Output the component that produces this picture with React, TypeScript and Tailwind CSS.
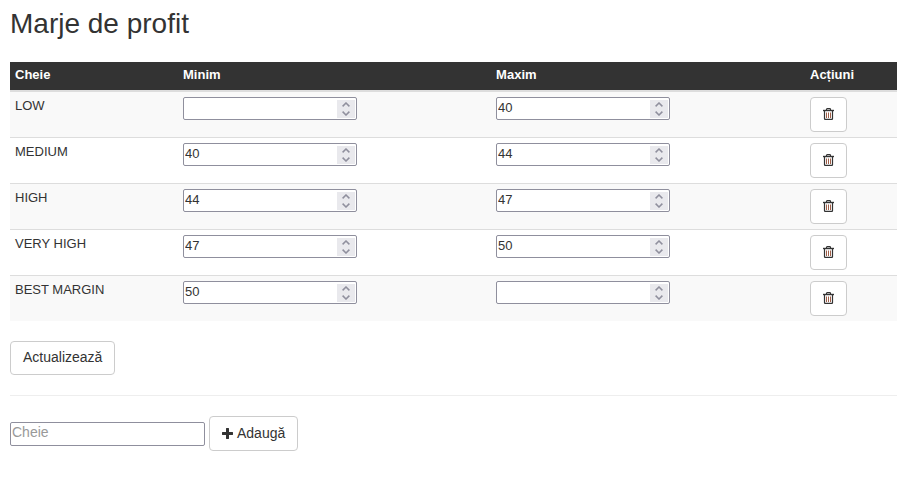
import { useState } from "react";

type Margin = {
  key: string;
  min: string;
  max: string;
};

const initialMargins: Margin[] = [
  { key: "LOW", min: "", max: "40" },
  { key: "MEDIUM", min: "40", max: "44" },
  { key: "HIGH", min: "44", max: "47" },
  { key: "VERY HIGH", min: "47", max: "50" },
  { key: "BEST MARGIN", min: "50", max: "" },
];

function TrashIcon() {
  return (
    <svg width="11" height="12" viewBox="0 0 11 12" fill="none" stroke="#333" aria-hidden="true">
      <path d="M3.5 2V1.5q0-.8.8-.8h2.4q.8 0 .8.8V2" strokeWidth="1.2" />
      <path d="M0 2.5h11" strokeWidth="1.4" />
      <path d="M1.5 3v7.7q0 .7.7.7h6.6q.7 0 .7-.7V3" strokeWidth="1.2" />
      <path d="M3.5 4.5V10M5.5 4.5V10M7.5 4.5V10" stroke="#a0604a" />
    </svg>
  );
}

function PlusIcon() {
  return (
    <svg width="11" height="11" viewBox="0 0 11 11" fill="#333" aria-hidden="true">
      <path d="M4.4 0h2.2q.4 0 .4.4V4h3.6q.4 0 .4.4v2.2q0 .4-.4.4H7v3.6q0 .4-.4.4H4.4q-.4 0-.4-.4V7H.4q-.4 0-.4-.4V4.4Q0 4 .4 4H4V.4q0-.4.4-.4z" />
    </svg>
  );
}

function NumberField({
  label,
  value,
  onChange,
}: {
  label: string;
  value: string;
  onChange: (value: string) => void;
}) {
  const step = (by: number) => onChange(String(Number(value) + by));

  return (
    <div className="flex h-[23px] w-[174px] items-center rounded-xs border border-[#8f8f9d] bg-white pr-px">
      <input
        type="number"
        aria-label={label}
        value={value}
        onChange={(e) => onChange(e.target.value)}
        className="h-5 min-w-0 flex-1 appearance-none pb-0.5 pl-px leading-[18px] outline-none [appearance:textfield]"
      />
      <div className="mt-px flex h-[18px] w-[18px] flex-col bg-[#e9e9ed]">
        <button type="button" aria-label="+1" onClick={() => step(1)} className="flex h-[9px] items-center justify-center">
          <svg width="8" height="5" viewBox="0 0 8 5" fill="none" stroke="#8f8f9d" strokeWidth="1.5">
            <path d="M.6 4.4 4 1l3.4 3.4" />
          </svg>
        </button>
        <button type="button" aria-label="-1" onClick={() => step(-1)} className="flex h-[9px] items-center justify-center">
          <svg width="8" height="5" viewBox="0 0 8 5" fill="none" stroke="#8f8f9d" strokeWidth="1.5">
            <path d="M.6.6 4 4 7.4.6" />
          </svg>
        </button>
      </div>
    </div>
  );
}

export default function App() {
  const [margins, setMargins] = useState(initialMargins);
  const [newKey, setNewKey] = useState("");

  const update = (index: number, change: Partial<Margin>) =>
    setMargins(margins.map((m, i) => (i === index ? { ...m, ...change } : m)));

  const add = () => {
    if (!newKey) return;
    setMargins([...margins, { key: newKey, min: "", max: "" }]);
    setNewKey("");
  };

  return (
    <main className="bg-white pt-[7px] pr-1.5 pl-2.5 font-['Liberation_Sans',Arial,sans-serif] text-sm text-[#333]">
      <h1 className="mb-[22px] text-[28px] leading-[33px]">Marje de profit</h1>

      <table className="w-full table-fixed border-separate border-spacing-0 text-[13px] leading-[18px]">
        <thead>
          <tr className="bg-[#333] text-left text-white">
            <th className="w-[168px] border-b-2 border-[#ddd] px-[5px] pt-1 pb-1.5">Cheie</th>
            <th className="w-[35.3%] border-b-2 border-[#ddd] px-[5px] pt-1 pb-1.5">Minim</th>
            <th className="border-b-2 border-[#ddd] px-[5px] pt-1 pb-1.5">Maxim</th>
            <th className="w-[92px] border-b-2 border-[#ddd] px-[5px] pt-1 pb-1.5">Acțiuni</th>
          </tr>
        </thead>
        <tbody className="[&>tr+tr>td]:border-t [&>tr+tr>td]:border-[#ddd]">
          {margins.map((m, i) => (
            <tr key={m.key} className="align-top odd:bg-[#f9f9f9]">
              <td className="p-[5px]">{m.key}</td>
              <td className="p-[5px]">
                <NumberField label={`${m.key} minim`} value={m.min} onChange={(min) => update(i, { min })} />
              </td>
              <td className="p-[5px]">
                <NumberField label={`${m.key} maxim`} value={m.max} onChange={(max) => update(i, { max })} />
              </td>
              <td className="p-[5px]">
                <button
                  type="button"
                  aria-label={`Șterge ${m.key}`}
                  onClick={() => setMargins(margins.filter((_, j) => j !== i))}
                  className="flex h-[35px] w-[37px] items-center justify-center rounded border border-[#ccc] bg-white pb-px"
                >
                  <TrashIcon />
                </button>
              </td>
            </tr>
          ))}
        </tbody>
      </table>

      <button type="button" className="mt-5 block rounded border border-[#ccc] bg-white px-3 pt-[5px] pb-[7px] leading-5">
        Actualizează
      </button>

      <hr className="my-5 border-[#eee]" />

      <div className="flex items-center gap-1">
        <input
          type="text"
          aria-label="Cheie"
          placeholder="Cheie"
          value={newKey}
          onChange={(e) => setNewKey(e.target.value)}
          className="h-6 w-[195px] rounded-xs border border-[#8f8f9d] px-px pb-1 leading-5 placeholder:text-[#999]"
        />
        <button
          type="button"
          onClick={add}
          className="flex h-[35px] items-center gap-1 rounded border border-[#ccc] bg-white px-3 pb-px leading-5"
        >
          <PlusIcon />
          Adaugă
        </button>
      </div>
    </main>
  );
}
